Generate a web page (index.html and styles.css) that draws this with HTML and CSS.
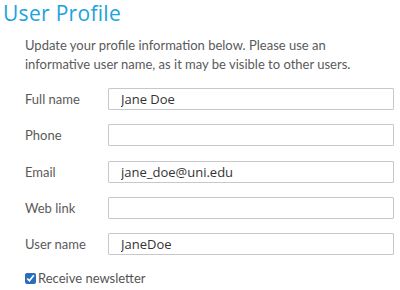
FILE: index.html
```html
<!DOCTYPE html>
<html>
<head>
<meta charset="utf-8">
<link rel="stylesheet" href="styles.css">
</head>
<body>
<h1 class="title">User Profile</h1>
<div class="panel">
  <p class="intro">Update your profile information below. Please use an informative user name, as it may be visible to other users.</p>
  <form class="form">
    <div class="row"><label class="label">Full name</label><input class="field" type="text" value="Jane Doe"></div>
    <div class="row"><label class="label">Phone</label><input class="field" type="text" value=""></div>
    <div class="row"><label class="label">Email</label><input class="field" type="text" value="jane_doe@uni.edu"></div>
    <div class="row"><label class="label">Web link</label><input class="field" type="text" value=""></div>
    <div class="row"><label class="label">User name</label><input class="field" type="text" value="JaneDoe"></div>
    <label class="check"><input class="box" type="checkbox" checked><span>Receive newsletter</span></label>
  </form>
</div>
</body>
</html>
```
FILE: styles.css
```css
html, body {
  margin: 0;
  padding: 0;
  background: #fff;
}
body {
  font-family: Lato, "Open Sans", sans-serif;
  color: #5a5a5a;
  width: 400px;
  height: 290px;
  overflow: hidden;
}
.title {
  margin: 0;
  padding: 0 0 0 3px;
  font-family: "Open Sans", sans-serif;
  font-size: 21px;
  font-weight: 400;
  letter-spacing: 0.3px;
  line-height: 26px;
  color: #1aa3dc;
}
.panel {
  padding: 0 6px 0 25px;
}
.intro {
  margin: 10px 0 0;
  font-size: 13px;
  line-height: 19px;
  color: #5a5a5a;
}
.form {
  margin-top: 14px;
  display: flex;
  flex-direction: column;
  gap: 14.3px;
}
.row {
  display: flex;
  align-items: center;
  height: 22px;
}
.label {
  width: 83px;
  font-size: 13px;
  color: #5a5a5a;
}
.field {
  flex: 1;
  height: 22px;
  box-sizing: border-box;
  border: 1px solid #c8c8cc;
  border-radius: 1px;
  padding: 0 12px;
  font-family: "Open Sans", sans-serif;
  font-size: 13px;
  color: #333;
  background: #fff;
  outline: none;
}
.check {
  display: flex;
  align-items: center;
  gap: 2px;
  font-size: 13px;
  color: #555;
  margin-top: 1px;
}
.box {
  margin: 0;
  width: 11px;
  height: 11px;
  accent-color: #2a6ebb;
}
```
